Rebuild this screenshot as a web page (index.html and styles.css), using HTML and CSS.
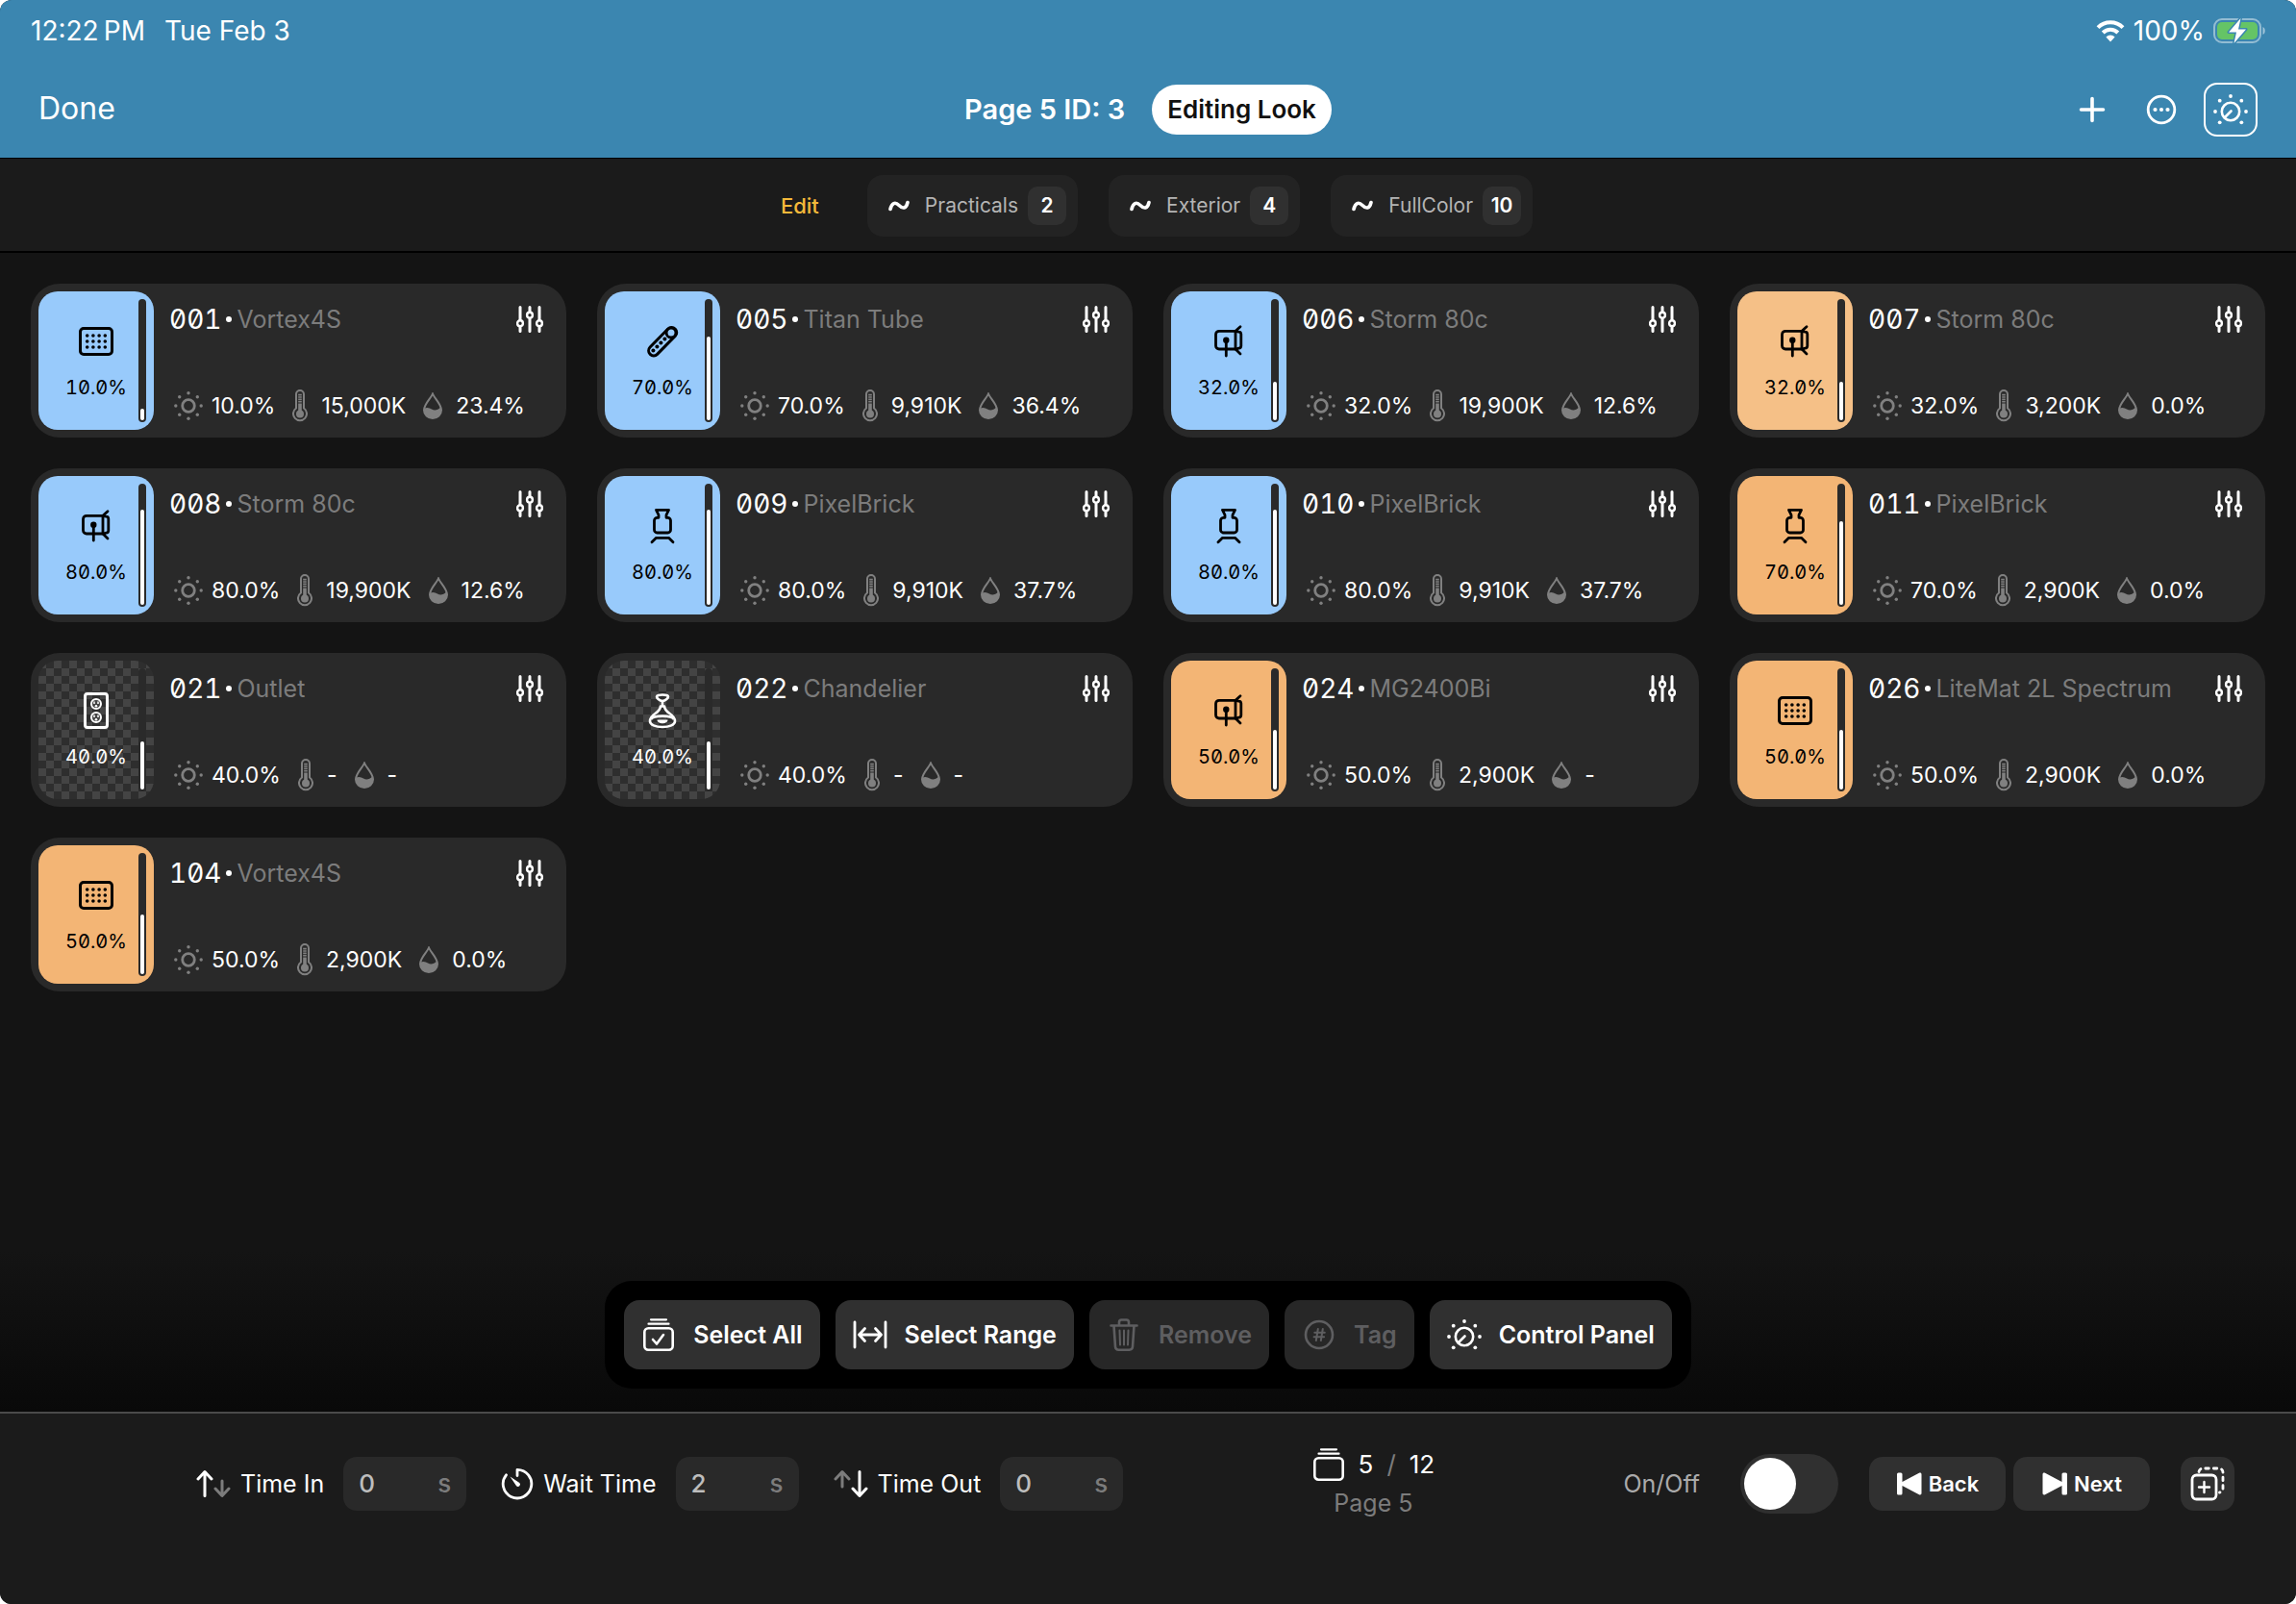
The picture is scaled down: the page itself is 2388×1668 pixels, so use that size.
FILE: index.html
```
<!DOCTYPE html>
<html lang="en">
<head>
    <meta charset="UTF-8">
    <meta name="viewport" content="width=device-width, initial-scale=1.0">
    <title>Page 5 - Editing Look</title>
    <link rel="stylesheet" href="styles.css">
</head>
<body>
    <!-- Icon set -->
    <svg class="sprite" aria-hidden="true">
        <symbol id="i-wifi" viewBox="0 0 30 24">
            <g fill="none" stroke="currentColor" stroke-width="4">
                <path d="M2 8.6a18.4 18.4 0 0 1 26 0"/>
                <path d="M7.2 14a11 11 0 0 1 15.600 0"/>
            </g>
            <path d="M15 23.500l-4.600-5a6.500 6.500 0 0 1 9.200 0z" fill="currentColor"/>
        </symbol>
        <symbol id="i-battery" viewBox="0 0 54 28">
            <rect x="1" y="2" width="48" height="24" rx="8" fill="none" stroke="#fff" stroke-opacity=".45" stroke-width="2"/>
            <rect x="4" y="5" width="42" height="18" rx="5" fill="#65c466"/>
            <path d="M51.500 10c3 1.200 3 6.800 0 8z" fill="#fff" fill-opacity=".5"/>
            <path d="M28.500 1L16 15.500h8L21.500 27 34 12.500h-8z" fill="#fff" stroke="#3b86b0" stroke-width="3" paint-order="stroke" stroke-linejoin="round"/>
        </symbol>
        <symbol id="i-plus" viewBox="0 0 36 36">
            <path d="M18 6.500v23M6.500 18h23" stroke="currentColor" stroke-width="3.600" stroke-linecap="round"/>
        </symbol>
        <symbol id="i-more" viewBox="0 0 36 36">
            <circle cx="18" cy="18" r="13.800" fill="none" stroke="currentColor" stroke-width="2.800"/>
            <g fill="currentColor"><circle cx="11.500" cy="18" r="2.100"/><circle cx="18" cy="18" r="2.100"/><circle cx="24.500" cy="18" r="2.100"/></g>
        </symbol>
        <symbol id="i-dial" viewBox="0 0 36 36">
            <g fill="none" stroke="currentColor" stroke-width="2.600" stroke-linecap="round">
                <circle cx="18" cy="20" r="9.200"/>
                <path d="M18.500 19.500l-6 6"/>
            </g>
            <g fill="currentColor">
                <circle cx="18" cy="4" r="1.900"/><circle cx="6.700" cy="8.700" r="1.900"/><circle cx="29.300" cy="8.700" r="1.900"/>
                <circle cx="2" cy="20" r="1.900"/><circle cx="34" cy="20" r="1.900"/><circle cx="6.700" cy="31.300" r="1.900"/><circle cx="29.300" cy="31.300" r="1.900"/>
            </g>
        </symbol>
        <symbol id="i-wave" viewBox="0 0 22 14">
            <path d="M2 10.500C3.500 4 7 2.500 11 6.500S18.500 10 20 3.500" fill="none" stroke="currentColor" stroke-width="3.600" stroke-linecap="round"/>
        </symbol>
        <symbol id="i-sliders" viewBox="0 0 28 28">
            <g fill="none" stroke="currentColor" stroke-width="3" stroke-linecap="round">
                <path d="M4 1.500v13M4 22v4.500M14 1.500V6M14 13.500v13M24 1.500v13M24 22v4.500"/>
                <g stroke-width="2.400"><circle cx="4" cy="18.200" r="2.900"/><circle cx="14" cy="9.700" r="2.900"/><circle cx="24" cy="18.200" r="2.900"/></g>
            </g>
        </symbol>
        <symbol id="i-sun" viewBox="0 0 30 30">
            <circle cx="15" cy="15" r="6.300" fill="none" stroke="currentColor" stroke-width="2.800"/>
            <g fill="currentColor">
                <circle cx="15" cy="1.800" r="1.700"/><circle cx="15" cy="28.200" r="1.700"/><circle cx="1.800" cy="15" r="1.700"/><circle cx="28.200" cy="15" r="1.700"/>
                <circle cx="5.700" cy="5.700" r="1.700"/><circle cx="24.300" cy="5.700" r="1.700"/><circle cx="5.700" cy="24.300" r="1.700"/><circle cx="24.300" cy="24.300" r="1.700"/>
            </g>
        </symbol>
        <symbol id="i-temp" viewBox="0 0 16 34">
            <path d="M4 19.500V5a4 4 0 0 1 8 0v14.500a7 7 0 1 1-8 0z" fill="none" stroke="currentColor" stroke-width="2"/>
            <circle cx="8" cy="25.500" r="4" fill="currentColor"/>
            <path d="M8 23V16" stroke="currentColor" stroke-width="3.600"/>
            <path d="M8 16V4" stroke="currentColor" stroke-width="3.600" stroke-dasharray="1.600 .8"/>
        </symbol>
        <symbol id="i-drop" viewBox="0 0 20 28">
            <path d="M10 1.500C12 6.500 19 12 19 18.500a9 8.500 0 0 1-18 0C1 12 8 6.500 10 1.500z" fill="none" stroke="currentColor" stroke-width="2"/>
            <path d="M1 17c3-2 5.500-1 8 .5s6 1.500 9.500-2l.5 3a9 8.500 0 0 1-18 0z" fill="currentColor"/>
        </symbol>

        <!-- Fixture types -->
        <symbol id="i-panel" viewBox="0 0 40 40">
            <rect x="3.500" y="6.500" width="33" height="27" rx="3.500" fill="none" stroke="currentColor" stroke-width="3"/>
            <g fill="currentColor">
                <circle cx="10.700" cy="14" r="1.800"/><circle cx="16.900" cy="14" r="1.800"/><circle cx="23.100" cy="14" r="1.800"/><circle cx="29.300" cy="14" r="1.800"/>
                <circle cx="10.700" cy="20" r="1.800"/><circle cx="16.900" cy="20" r="1.800"/><circle cx="23.100" cy="20" r="1.800"/><circle cx="29.300" cy="20" r="1.800"/>
                <circle cx="10.700" cy="26" r="1.800"/><circle cx="16.900" cy="26" r="1.800"/><circle cx="23.100" cy="26" r="1.800"/><circle cx="29.300" cy="26" r="1.800"/>
            </g>
        </symbol>
        <symbol id="i-tube" viewBox="0 0 40 40">
            <g fill="none" stroke="currentColor" stroke-width="3">
                <rect x="1.500" y="15" width="37" height="10.500" rx="5.200" transform="rotate(-45.500 20 20)"/>
                <circle cx="29" cy="11" r="5"/>
            </g>
            <g fill="currentColor"><circle cx="10.400" cy="29.600" r="2"/><circle cx="14.400" cy="25.600" r="2"/><circle cx="18.400" cy="21.600" r="2"/><circle cx="22.400" cy="17.600" r="2"/></g>
        </symbol>
        <symbol id="i-head" viewBox="0 0 40 40">
            <g fill="none" stroke="currentColor" stroke-width="2.800" stroke-linecap="round" stroke-linejoin="round">
                <path d="M27 9.300H10a3.500 3.500 0 0 0-3.500 3.500V24.500a3.500 3.500 0 0 0 3.500 3.500h17z"/>
                <path d="M32 4.800l-5 4.500 3.500.8a2.500 2.500 0 0 1 2.300 2.400v12.300a2.500 2.500 0 0 1-2.300 2.400L27 28l5 5"/>
                <path d="M17.300 19v16"/>
            </g>
            <circle cx="17.300" cy="18.700" r="3.200" fill="currentColor"/>
        </symbol>
        <symbol id="i-brick" viewBox="0 0 40 40">
            <g fill="none" stroke="currentColor" stroke-width="2.800" stroke-linecap="round" stroke-linejoin="round">
                <path d="M13.500 3.300h13L24 8.500v2.800h1.500a3 3 0 0 1 3 3V24a3 3 0 0 1-3 3h-11a3 3 0 0 1-3-3v-9.700a3 3 0 0 1 3-3H16V8.500z"/>
                <path d="M9 36.700l4.500-4.400h13l4.500 4.400"/>
            </g>
        </symbol>
        <symbol id="i-outlet" viewBox="0 0 40 40">
            <g fill="none" stroke="currentColor">
                <rect x="8.500" y="2.500" width="23" height="35" rx="2.500" stroke-width="3"/>
                <circle cx="20" cy="13" r="5" stroke-width="2"/><circle cx="20" cy="27" r="5" stroke-width="2"/>
                <path d="M18 10.500v2.500M22 10.500v2.500M18 24.500v2.500M22 24.500v2.500" stroke-width="1.500"/>
            </g>
            <circle cx="20" cy="15.300" r="1.300" fill="currentColor"/><circle cx="20" cy="29.300" r="1.300" fill="currentColor"/>
        </symbol>
        <symbol id="i-chandelier" viewBox="0 0 40 40">
            <g fill="none" stroke="currentColor" stroke-width="2.600" stroke-linejoin="round">
                <path d="M14 5.500c0-2.600 12-2.600 12 0 0 1.500-3 4.500-6 4.500s-6-3-6-4.500z"/>
                <path d="M20 10v5"/>
                <path d="M18 15.500h4c.5 4 2.500 5.500 5.500 7.500s5.500 4.500 5.500 8c0 3.500-5.500 6-13 6S7 34.500 7 31c0-3.500 2.500-6 5.500-8s5-3.500 5.500-7.500z"/>
                <path d="M8 29c2.500-4.500 21.500-4.500 24 0"/>
            </g>
            <path d="M14.500 29.500h11c0 5-11 5-11 0z" fill="currentColor"/>
        </symbol>

        <!-- Action bar -->
        <symbol id="i-select-all" viewBox="0 0 36 36">
            <g fill="none" stroke="currentColor" stroke-width="2.600" stroke-linecap="round" stroke-linejoin="round">
                <rect x="3.300" y="11.300" width="29.400" height="22.400" rx="4"/>
                <path d="M12 23l4 4.500 7-9.500"/>
                <path d="M10 2.300h16M7.500 6.700h21" stroke-width="2.200"/>
            </g>
        </symbol>
        <symbol id="i-range" viewBox="0 0 36 36">
            <path d="M2 5v26M34 5v26M7 18h22M12.500 11.500L6.500 18l6 6.500M23.500 11.500l6 6.500-6 6.500" fill="none" stroke="currentColor" stroke-width="2.800" stroke-linecap="round" stroke-linejoin="round"/>
        </symbol>
        <symbol id="i-trash" viewBox="0 0 36 36">
            <g fill="none" stroke="currentColor" stroke-width="2.600" stroke-linecap="round" stroke-linejoin="round">
                <path d="M4.500 8.500h27M7.500 8.500l1.500 22a3.500 3.500 0 0 0 3.500 3.200h11a3.500 3.500 0 0 0 3.500-3.200l1.500-22M13 8V5a2.500 2.500 0 0 1 2.500-2.500h5A2.500 2.500 0 0 1 23 5v3"/>
                <path d="M13.500 13.500l.5 15M18 13.500v15M22.500 13.500l-.5 15" stroke-width="2"/>
            </g>
        </symbol>
        <symbol id="i-tag" viewBox="0 0 36 36">
            <g fill="none" stroke="currentColor" stroke-linecap="round">
                <circle cx="18" cy="18" r="14" stroke-width="2.600"/>
                <path d="M16.800 12l-2 12M21.800 12l-2 12M13.300 15.800h10.500M12.600 20.300h10.500" stroke-width="2"/>
            </g>
        </symbol>

        <!-- Footer -->
        <symbol id="i-arrow-up" viewBox="0 0 18 30">
            <path d="M9 27.500V3M2 10l7-7.500 7 7.500" fill="none" stroke="currentColor" stroke-width="3" stroke-linecap="round" stroke-linejoin="round"/>
        </symbol>
        <symbol id="i-arrow-up-short" viewBox="0 0 18 30">
            <path d="M9 18V3M2 10l7-7.500 7 7.500" fill="none" stroke="currentColor" stroke-width="3" stroke-linecap="round" stroke-linejoin="round"/>
        </symbol>
        <symbol id="i-timer" viewBox="0 0 34 34">
            <g fill="none" stroke="currentColor" stroke-width="2.800" stroke-linecap="round" stroke-linejoin="round">
                <path d="M17 8.500V2.300a14.800 14.800 0 1 1-11.500 5.500"/>
            </g>
            <path d="M9.500 9.500l9.800 6.500a2.200 2.200 0 0 1-3.200 3.200z" fill="currentColor"/>
        </symbol>
        <symbol id="i-stack" viewBox="0 0 34 36">
            <g fill="none" stroke="currentColor" stroke-width="2.600" stroke-linecap="round">
                <rect x="2.300" y="11.300" width="29.400" height="22.400" rx="4"/>
                <path d="M9 2.300h16M6.500 6.700h21" stroke-width="2.200"/>
            </g>
        </symbol>
        <symbol id="i-back" viewBox="0 0 28 24">
            <path d="M1 2a1.500 1.500 0 0 1 1.500-1.500H5A1.500 1.500 0 0 1 6.500 2v8L24 .8c1.300-.7 2.500 0 2.500 1.400v19.600c0 1.400-1.200 2.100-2.500 1.400L6.500 14v8A1.500 1.500 0 0 1 5 23.500H2.500A1.500 1.500 0 0 1 1 22z" fill="currentColor"/>
        </symbol>
        <symbol id="i-duplicate" viewBox="0 0 36 36">
            <g fill="none" stroke="currentColor" stroke-width="2.800" stroke-linecap="round">
                <rect x="2" y="9" width="25" height="25" rx="4.500"/>
                <path d="M14.500 16v11M9 21.500h11" stroke-width="2.400"/>
                <path d="M9 5.500A4 4 0 0 1 13 2h17a4 4 0 0 1 4 4v17a4 4 0 0 1-3.500 4" stroke-dasharray="3.500 5"/>
            </g>
        </symbol>
    </svg>

    <div class="app">
        <header class="header">
            <div class="status-bar">
                <div class="status-group clock">
                    <span>12:22&#8201;PM</span>
                    <span>Tue Feb 3</span>
                </div>
                <div class="status-group">
                    <svg class="wifi"><use href="#i-wifi"/></svg>
                    <span>100%</span>
                    <svg class="battery"><use href="#i-battery"/></svg>
                </div>
            </div>
            <nav class="nav">
                <div class="nav-side">
                    <button class="btn-plain">Done</button>
                </div>
                <div class="nav-title">
                    <h1>Page 5 ID: 3</h1>
                    <span class="pill">Editing Look</span>
                </div>
                <div class="nav-side nav-actions">
                    <button class="btn-icon btn-add" aria-label="Add"><svg class="icon"><use href="#i-plus"/></svg></button>
                    <button class="btn-icon" aria-label="More"><svg class="icon"><use href="#i-more"/></svg></button>
                    <button class="btn-icon boxed" aria-label="Controls"><svg class="icon"><use href="#i-dial"/></svg></button>
                </div>
            </nav>
        </header>

        <div class="tag-bar">
            <button class="btn-edit">Edit</button>
            <button class="tag"><svg class="wave"><use href="#i-wave"/></svg><span class="tag-name">Practicals</span><span class="tag-count">2</span></button>
            <button class="tag"><svg class="wave"><use href="#i-wave"/></svg><span class="tag-name">Exterior</span><span class="tag-count">4</span></button>
            <button class="tag"><svg class="wave"><use href="#i-wave"/></svg><span class="tag-name">FullColor</span><span class="tag-count">10</span></button>
        </div>

        <main class="main">
            <div class="grid" id="fixtures"></div>

            <div class="dock">
                <div class="actions">
                    <button class="action"><svg class="icon"><use href="#i-select-all"/></svg>Select All</button>
                    <button class="action"><svg class="icon"><use href="#i-range"/></svg>Select Range</button>
                    <button class="action" disabled><svg class="icon"><use href="#i-trash"/></svg>Remove</button>
                    <button class="action" disabled><svg class="icon"><use href="#i-tag"/></svg>Tag</button>
                    <button class="action"><svg class="icon"><use href="#i-dial"/></svg>Control Panel</button>
                </div>
            </div>
        </main>

        <footer class="footer">
            <div class="times">
                <div class="time">
                    <span class="arrows"><svg class="arrow"><use href="#i-arrow-up"/></svg><svg class="arrow down dim"><use href="#i-arrow-up-short"/></svg></span>
                    <label for="time-in">Time In</label>
                    <span class="field"><input id="time-in" type="text" value="0"><span class="unit">s</span></span>
                </div>
                <div class="time">
                    <svg class="timer"><use href="#i-timer"/></svg>
                    <label for="wait-time">Wait Time</label>
                    <span class="field"><input id="wait-time" type="text" value="2"><span class="unit">s</span></span>
                </div>
                <div class="time">
                    <span class="arrows"><svg class="arrow dim"><use href="#i-arrow-up-short"/></svg><svg class="arrow down"><use href="#i-arrow-up"/></svg></span>
                    <label for="time-out">Time Out</label>
                    <span class="field"><input id="time-out" type="text" value="0"><span class="unit">s</span></span>
                </div>
            </div>

            <div class="pager">
                <div class="pager-count">
                    <svg class="stack"><use href="#i-stack"/></svg>
                    <span>5</span><span class="slash">/</span><span>12</span>
                </div>
                <div class="pager-name">Page 5</div>
            </div>

            <div class="transport">
                <label class="switch-label" for="on-off">On/Off</label>
                <input class="switch" id="on-off" type="checkbox" role="switch">
                <div class="steps">
                    <button class="step"><svg class="skip"><use href="#i-back"/></svg>Back</button>
                    <button class="step"><svg class="skip flip"><use href="#i-back"/></svg>Next</button>
                </div>
                <button class="step square" aria-label="Duplicate page"><svg class="icon"><use href="#i-duplicate"/></svg></button>
            </div>
        </footer>
    </div>

    <script src="script.js"></script>
</body>
</html>
```
FILE: styles.css
```
:root {
    --header-color: #3b86b0;
    --bar-color: #1b1b1b;
    --background-color: #141414;
    --card-color: #292929;
    --button-color: #303030;
    --muted-color: #7c7c7c;
    --accent-color: #f5b93a;
    --cool-color: #98cafb;
    --warm-color: #f3b575;
    --warm-light-color: #f5c087;
}

* {
    box-sizing: border-box;
}

body {
    margin: 0;
    background: #fff;
    color: #fff;
    font-family: Inter, "Open Sans", sans-serif;
    font-size: 25px;
    line-height: 32px;
}

button,
input {
    font: inherit;
    color: inherit;
    border: 0;
    padding: 0;
    margin: 0;
    background: none;
}

svg {
    display: block;
    flex: none;
}

.sprite {
    display: none;
}

.icon {
    width: 36px;
    height: 36px;
}

.app {
    min-height: 100vh;
    display: flex;
    flex-direction: column;
    background: var(--background-color);
    border-radius: 12px;
    overflow: hidden;
}

/* Header */
.header {
    background: var(--header-color);
    border-bottom: 1px solid #000;
}

.status-bar {
    display: flex;
    justify-content: space-between;
    padding: 16px 32px;
    font-size: 28px;
}

.status-group {
    display: flex;
    align-items: center;
    gap: 9px;
}

.clock {
    gap: 20px;
}

.wifi {
    width: 30px;
    height: 24px;
}

.battery {
    width: 54px;
    height: 28px;
}

.nav {
    display: flex;
    align-items: center;
    height: 100px;
    padding: 0 40px;
}

.nav-side {
    flex: 1;
}

.btn-plain {
    font-size: 32px;
}

.nav-title {
    display: flex;
    align-items: center;
    gap: 28px;
}

.nav-title h1 {
    margin: 0;
    font-size: 29px;
    font-weight: 600;
}

.pill {
    padding: 10px 16px;
    border-radius: 26px;
    background: #fff;
    color: #111;
    font-size: 26px;
    font-weight: 600;
}

.nav-actions {
    display: flex;
    align-items: center;
    justify-content: flex-end;
    gap: 26px;
}

.btn-add {
    margin-right: 10px;
}

.boxed {
    display: grid;
    place-items: center;
    width: 56px;
    height: 56px;
    border: 2px solid #fff;
    border-radius: 14px;
}

/* Tags */
.tag-bar {
    display: flex;
    justify-content: center;
    gap: 32px;
    padding: 17px 32px 15px;
    background: var(--bar-color);
    border-bottom: 2px solid #000;
    font-size: 21px;
}

.btn-edit {
    padding: 0 18px;
    color: var(--accent-color);
    font-size: 22px;
    font-weight: 500;
}

.tag {
    display: flex;
    align-items: center;
    height: 64px;
    padding: 0 12px 0 22px;
    border-radius: 16px;
    background: #232323;
}

.wave {
    width: 22px;
    height: 14px;
}

.tag-name {
    margin: 0 10px 0 16px;
    color: #b4b4b4;
}

.tag-count {
    width: 40px;
    border-radius: 10px;
    background: var(--button-color);
    line-height: 40px;
    font-weight: 600;
    text-align: center;
}

/* Fixtures */
.main {
    flex: 1;
    display: flex;
    flex-direction: column;
    justify-content: space-between;
}

.grid {
    display: grid;
    grid-template-columns: repeat(4, 1fr);
    gap: 32px;
    padding: 32px 32px 0;
}

.card {
    display: flex;
    height: 160px;
    padding: 8px;
    border-radius: 30px;
    background: var(--card-color);
}

.swatch {
    position: relative;
    flex: none;
    width: 120px;
    display: flex;
    flex-direction: column;
    align-items: center;
    padding-top: 32px;
    border-radius: 20px;
    color: #000;
    overflow: hidden;
}

.swatch.cool {
    background: var(--cool-color);
}

.swatch.warm {
    background: var(--warm-color);
}

.swatch.warm-light {
    background: var(--warm-light-color);
}

.swatch.none {
    background: repeating-conic-gradient(#2e2e2e 0 25%, #444 0 50%) 0 0 / 16px 16px;
    color: #fff;
}

.fixture-icon {
    width: 40px;
    height: 40px;
}

.swatch-value {
    margin-top: 12px;
    font-size: 20px;
    font-feature-settings: "tnum", "zero";
}

.level {
    position: absolute;
    top: 8px;
    right: 8px;
    bottom: 8px;
    width: 8px;
    padding: 2px;
    display: flex;
    align-items: flex-end;
    border-radius: 4px;
    background: #2a2a2a;
}

.level-fill {
    width: 100%;
    border-radius: 2px;
    background: #fff;
}

.card-body {
    flex: 1;
    min-width: 0;
    display: flex;
    flex-direction: column;
    justify-content: space-between;
    padding: 13px 16px 8px 16px;
}

.card-title {
    display: flex;
    align-items: center;
    gap: 5px;
    margin: 0;
    font-size: 25px;
    font-weight: 400;
}

.card-title .number {
    font-size: 28px;
    font-feature-settings: "tnum", "zero";
}

.card-title .dot {
    width: 6px;
    height: 6px;
    border-radius: 3px;
    background: #fff;
}

.card-title .name {
    color: var(--muted-color);
}

.sliders {
    width: 28px;
    height: 28px;
}

.card-title button {
    margin-left: auto;
}

.stats {
    display: flex;
    gap: 18px;
    padding-left: 5px;
    font-size: 23px;
}

.stat {
    display: flex;
    align-items: center;
    gap: 14px;
}

.stat:first-child {
    gap: 9px;
}

.stat svg {
    color: #808080;
}

.sun {
    width: 30px;
    height: 30px;
}

.temp {
    width: 16px;
    height: 34px;
}

.drop {
    width: 20px;
    height: 28px;
}

/* Action bar */
.dock {
    display: flex;
    justify-content: center;
    padding: 32px 32px 24px;
    background: linear-gradient(#141414, #090909);
}

.actions {
    display: flex;
    gap: 16px;
    padding: 20px;
    border-radius: 28px;
    background: #000;
}

.action {
    display: flex;
    align-items: center;
    gap: 18px;
    height: 72px;
    padding: 0 18px;
    border-radius: 16px;
    background: var(--button-color);
    font-weight: 600;
}

.action:disabled {
    background: #272727;
    color: #5e5e60;
}

/* Footer */
.footer {
    display: flex;
    align-items: center;
    justify-content: space-between;
    padding: 27px 64px 79px 204px;
    border-top: 2px solid #4a4a4a;
    background: var(--bar-color);
}

.times {
    display: flex;
    gap: 36px;
}

.time {
    display: flex;
    align-items: center;
}

.time label {
    margin: 0 20px 0 10px;
}

.arrows {
    display: flex;
}

.arrow {
    width: 18px;
    height: 30px;
}

.arrow.down {
    transform: rotate(180deg);
}

.arrow.dim {
    color: var(--muted-color);
}

.timer {
    width: 34px;
    height: 34px;
}

.field {
    display: flex;
    align-items: center;
    width: 128px;
    height: 56px;
    padding: 0 16px;
    border-radius: 14px;
    background: var(--card-color);
    font-size: 26px;
    font-weight: 500;
}

.field input {
    flex: 1;
    min-width: 0;
    color: #bdbdbd;
}

.unit {
    color: var(--muted-color);
}

.pager {
    height: 92px;
    padding-top: 6px;
    line-height: 40px;
    text-align: center;
}

.pager-count {
    display: flex;
    align-items: center;
    gap: 14px;
    font-size: 26px;
}

.stack {
    width: 34px;
    height: 36px;
}

.slash,
.pager-name {
    color: var(--muted-color);
}

.transport {
    display: flex;
    align-items: center;
    gap: 32px;
}

.switch-label {
    margin-right: 10px;
    color: #aaa;
}

.switch {
    appearance: none;
    width: 102px;
    height: 62px;
    padding: 4px;
    border-radius: 31px;
    background: var(--button-color);
}

.switch::before {
    content: '';
    display: block;
    width: 54px;
    height: 54px;
    border-radius: 50%;
    background: #fff;
}

.switch:checked {
    background: #65c466;
}

.switch:checked::before {
    margin-left: auto;
}

.steps {
    display: flex;
    gap: 8px;
}

.step {
    display: flex;
    align-items: center;
    justify-content: center;
    gap: 6px;
    width: 142px;
    height: 56px;
    border-radius: 14px;
    background: var(--button-color);
    font-size: 22px;
    font-weight: 600;
}

.step.square {
    width: 56px;
}

.skip {
    width: 28px;
    height: 24px;
}

.skip.flip {
    transform: scaleX(-1);
}

@media (max-width: 1600px) {
    .grid {
        grid-template-columns: repeat(2, 1fr);
    }

    .footer {
        flex-wrap: wrap;
        gap: 24px;
        padding: 28px 32px;
    }
}
```
FILE: script.js
```
const fixtures = [
    { id: '001', name: 'Vortex4S', icon: 'panel', tone: 'cool', level: 10, temp: '15,000K', sat: '23.4%' },
    { id: '005', name: 'Titan Tube', icon: 'tube', tone: 'cool', level: 70, temp: '9,910K', sat: '36.4%' },
    { id: '006', name: 'Storm 80c', icon: 'head', tone: 'cool', level: 32, temp: '19,900K', sat: '12.6%' },
    { id: '007', name: 'Storm 80c', icon: 'head', tone: 'warm-light', level: 32, temp: '3,200K', sat: '0.0%' },
    { id: '008', name: 'Storm 80c', icon: 'head', tone: 'cool', level: 80, temp: '19,900K', sat: '12.6%' },
    { id: '009', name: 'PixelBrick', icon: 'brick', tone: 'cool', level: 80, temp: '9,910K', sat: '37.7%' },
    { id: '010', name: 'PixelBrick', icon: 'brick', tone: 'cool', level: 80, temp: '9,910K', sat: '37.7%' },
    { id: '011', name: 'PixelBrick', icon: 'brick', tone: 'warm', level: 70, temp: '2,900K', sat: '0.0%' },
    { id: '021', name: 'Outlet', icon: 'outlet', tone: 'none', level: 40, temp: '-', sat: '-' },
    { id: '022', name: 'Chandelier', icon: 'chandelier', tone: 'none', level: 40, temp: '-', sat: '-' },
    { id: '024', name: 'MG2400Bi', icon: 'head', tone: 'warm', level: 50, temp: '2,900K', sat: '-' },
    { id: '026', name: 'LiteMat 2L Spectrum', icon: 'panel', tone: 'warm', level: 50, temp: '2,900K', sat: '0.0%' },
    { id: '104', name: 'Vortex4S', icon: 'panel', tone: 'warm', level: 50, temp: '2,900K', sat: '0.0%' }
];

function renderCard(f) {
    const level = f.level.toFixed(1) + '%';
    return `
        <article class="card">
            <div class="swatch ${f.tone}">
                <svg class="fixture-icon"><use href="#i-${f.icon}"/></svg>
                <span class="swatch-value">${level}</span>
                <div class="level"><div class="level-fill" style="height: ${f.level}%"></div></div>
            </div>
            <div class="card-body">
                <h2 class="card-title">
                    <span class="number">${f.id}</span><span class="dot"></span><span class="name">${f.name}</span>
                    <button aria-label="Adjust ${f.name}"><svg class="sliders"><use href="#i-sliders"/></svg></button>
                </h2>
                <div class="stats">
                    <span class="stat"><svg class="sun"><use href="#i-sun"/></svg>${level}</span>
                    <span class="stat"><svg class="temp"><use href="#i-temp"/></svg>${f.temp}</span>
                    <span class="stat"><svg class="drop"><use href="#i-drop"/></svg>${f.sat}</span>
                </div>
            </div>
        </article>`;
}

document.getElementById('fixtures').innerHTML = fixtures.map(renderCard).join('');
```
